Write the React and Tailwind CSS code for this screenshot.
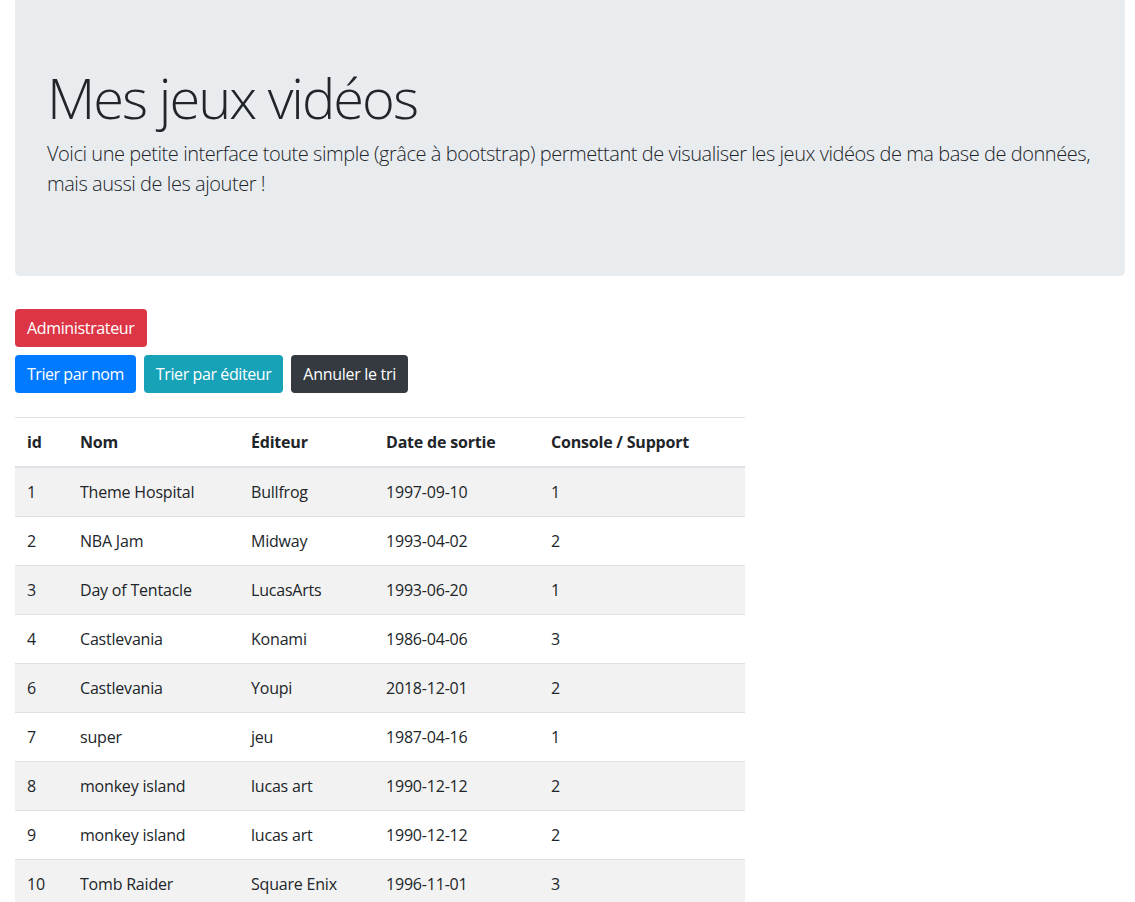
const games = [
  { id: 1, nom: 'Theme Hospital', editeur: 'Bullfrog', date: '1997-09-10', console: 1 },
  { id: 2, nom: 'NBA Jam', editeur: 'Midway', date: '1993-04-02', console: 2 },
  { id: 3, nom: 'Day of Tentacle', editeur: 'LucasArts', date: '1993-06-20', console: 1 },
  { id: 4, nom: 'Castlevania', editeur: 'Konami', date: '1986-04-06', console: 3 },
  { id: 6, nom: 'Castlevania', editeur: 'Youpi', date: '2018-12-01', console: 2 },
  { id: 7, nom: 'super', editeur: 'jeu', date: '1987-04-16', console: 1 },
  { id: 8, nom: 'monkey island', editeur: 'lucas art', date: '1990-12-12', console: 2 },
  { id: 9, nom: 'monkey island', editeur: 'lucas art', date: '1990-12-12', console: 2 },
  { id: 10, nom: 'Tomb Raider', editeur: 'Square Enix', date: '1996-11-01', console: 3 },
];

export default function App() {
  return (
    <div className="min-h-screen bg-white pl-[15px] pr-[10px] text-[#212529] text-base leading-6" style={{ fontFamily: '"Open Sans", "Noto Sans", sans-serif' }}>
      {/* Jumbotron */}
      <div className="bg-[#e9ecef] rounded-b-[5px] px-8 pt-16 pb-[61px] mb-[33px]">
        <h1 className="text-[56px] leading-[1.2] font-light mb-2 tracking-[-2px]">Mes jeux vidéos</h1>
        <p className="text-[20px] leading-[30px] font-light mb-4 tracking-[-0.45px] text-[#212529]">
          Voici une petite interface toute simple (grâce à bootstrap) permettant de visualiser les jeux vidéos de ma base de données, mais aussi de les ajouter !
        </p>
      </div>

      {/* Buttons */}
      <div className="mb-2">
        <button className="bg-[#dc3545] text-white rounded px-3 py-1.5 leading-[26px] tracking-[-0.35px]">Administrateur</button>
      </div>
      <div className="flex gap-2 mb-6">
        <button className="bg-[#007bff] text-white rounded px-3 py-1.5 leading-[26px] tracking-[-0.45px]">Trier par nom</button>
        <button className="bg-[#17a2b8] text-white rounded px-3 py-1.5 leading-[26px] tracking-[-0.4px]">Trier par éditeur</button>
        <button className="bg-[#343a40] text-white rounded px-3 py-1.5 leading-[26px] tracking-[-0.3px]">Annuler le tri</button>
      </div>

      {/* Table */}
      <table className="table-fixed w-[730px] text-left tracking-[-0.2px]">
        <thead>
          <tr className="border-t border-[#dee2e6] border-b-2">
            <th className="w-[53px] p-3 font-bold">id</th>
            <th className="w-[171px] p-3 font-bold">Nom</th>
            <th className="w-[135px] p-3 font-bold">Éditeur</th>
            <th className="w-[165px] p-3 font-bold">Date de sortie</th>
            <th className="p-3 font-bold">Console / Support</th>
          </tr>
        </thead>
        <tbody>
          {games.map((g, i) => (
            <tr key={g.id} className={(i % 2 === 0 ? 'bg-[#f2f2f2] ' : '') + 'border-t border-[#dee2e6]'}>
              <td className="p-3">{g.id}</td>
              <td className="p-3">{g.nom}</td>
              <td className="p-3">{g.editeur}</td>
              <td className="p-3">{g.date}</td>
              <td className="p-3">{g.console}</td>
            </tr>
          ))}
        </tbody>
      </table>
    </div>
  );
}
